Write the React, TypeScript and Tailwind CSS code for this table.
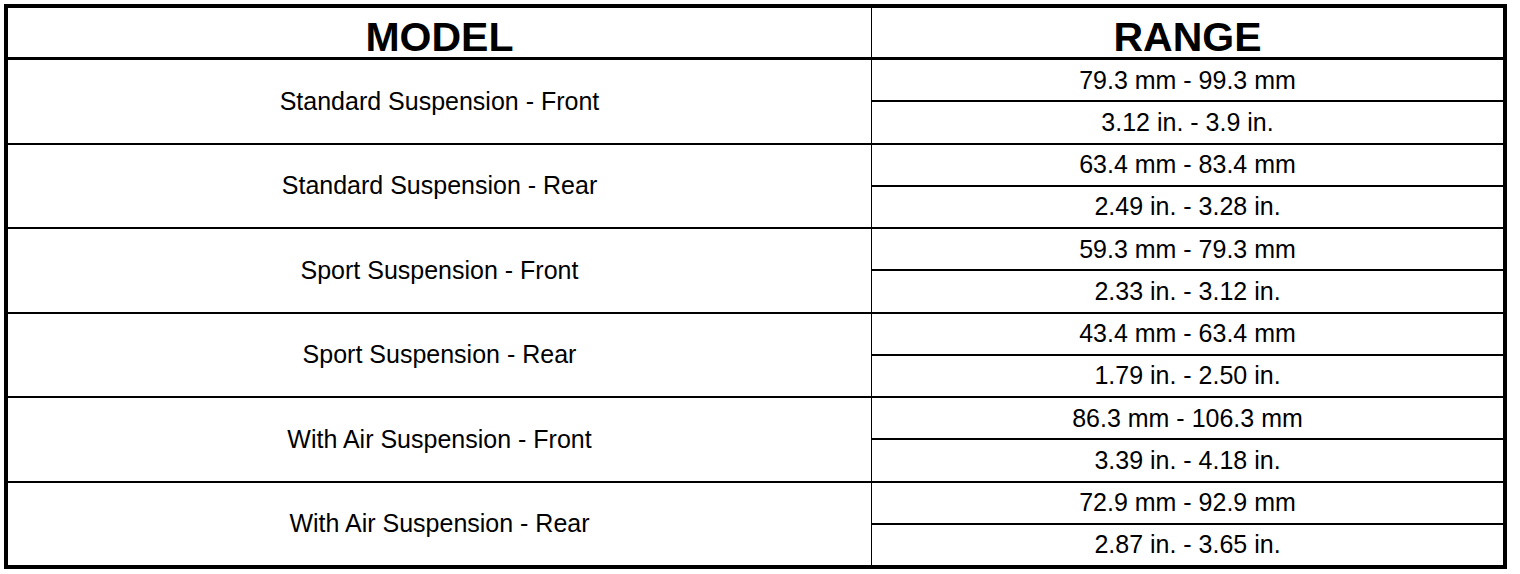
const rows = [
  { model: "Standard Suspension - Front", mm: "79.3 mm - 99.3 mm", inch: "3.12 in. - 3.9 in." },
  { model: "Standard Suspension - Rear", mm: "63.4 mm - 83.4 mm", inch: "2.49 in. - 3.28 in." },
  { model: "Sport Suspension - Front", mm: "59.3 mm - 79.3 mm", inch: "2.33 in. - 3.12 in." },
  { model: "Sport Suspension - Rear", mm: "43.4 mm - 63.4 mm", inch: "1.79 in. - 2.50 in." },
  { model: "With Air Suspension - Front", mm: "86.3 mm - 106.3 mm", inch: "3.39 in. - 4.18 in." },
  { model: "With Air Suspension - Rear", mm: "72.9 mm - 92.9 mm", inch: "2.87 in. - 3.65 in." },
];

function Cell({ text }: { text: string }) {
  return <span className="whitespace-nowrap text-[25px] leading-none">{text}</span>;
}

export default function App() {
  return (
    <div className="min-h-[574px] w-[1520px] bg-white p-1 font-['Liberation_Sans',Arial,sans-serif] text-black">
      <div className="flex h-[565px] w-[1503px] flex-col border-4 border-black">
        {/* header */}
        <div className="flex h-[52px] shrink-0 border-b-[3px] border-black">
          <div className="flex w-[864px] items-center justify-center border-r border-black pt-[9px]">
            <span className="text-[41px] font-bold leading-none">MODEL</span>
          </div>
          <div className="flex flex-1 items-center justify-center pt-[9px]">
            <span className="text-[41px] font-bold leading-none">RANGE</span>
          </div>
        </div>

        {/* body */}
        <div className="flex flex-1 flex-col">
          {rows.map((row, i) => (
            <div key={i} className={`flex flex-1 ${i > 0 ? "border-t-2 border-black" : ""}`}>
              <div className="flex w-[864px] items-center justify-center border-r border-black">
                <Cell text={row.model} />
              </div>
              <div className="flex flex-1 flex-col">
                <div className="flex flex-1 items-center justify-center border-b-2 border-black">
                  <Cell text={row.mm} />
                </div>
                <div className="flex flex-1 items-center justify-center">
                  <Cell text={row.inch} />
                </div>
              </div>
            </div>
          ))}
        </div>
      </div>
    </div>
  );
}
